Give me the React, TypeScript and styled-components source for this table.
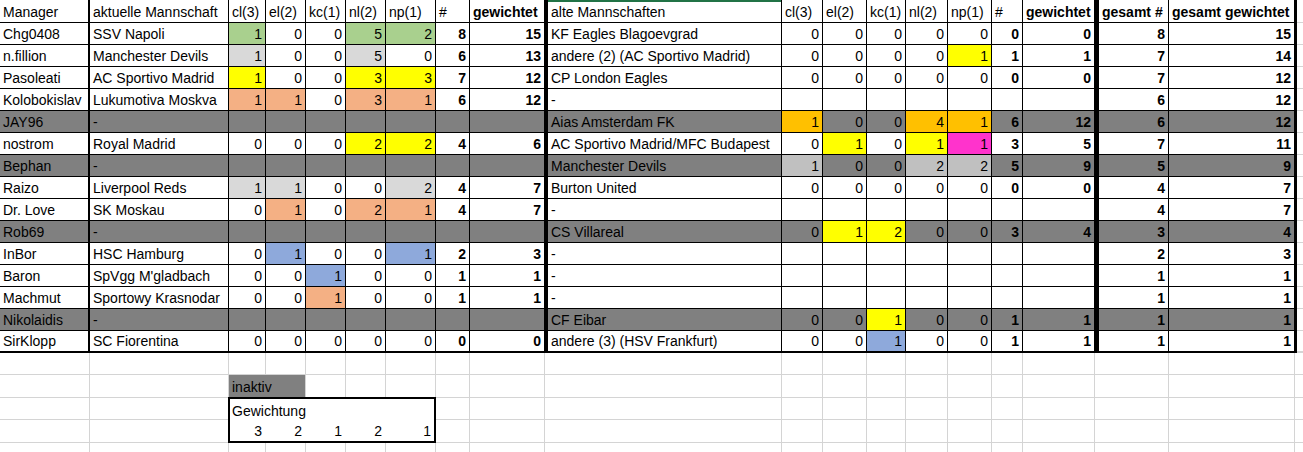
import styled, { createGlobalStyle, css } from "styled-components";

const GlobalStyle = createGlobalStyle`
    html, body {
        margin: 0;
        padding: 0;
        background: #fff;
    }
    body {
        font-family: "Liberation Sans", Arial, sans-serif;
        font-size: 14px;
        color: #000;
    }
`;

// column widths copied from the sheet (each includes its right border)
const COLS = "90px 139px 37px 40px 40px 40px 50px 34px 75px 3px 234px 41px 44px 39px 42px 44px 31px 72px 4px 70px 126px 2px 1fr";
const GRID = "#d4d4d4";
const GRAY = "#808080";

const COLORS: Record<string, string> = {
    g: "#a9d08e",
    l: "#d9d9d9",
    y: "#ffff00",
    s: "#f4b084",
    b: "#8ea9db",
    o: "#ffc000",
    m: "#ff33cc",
    c: "#c0c0c0",
};

const Sheet = styled.div`
    width: 1303px;
    height: 452px;
    overflow: hidden;
`;

const Row = styled.div<{ $h: number; $last?: boolean }>`
    display: grid;
    grid-template-columns: ${COLS};
    height: ${(p) => p.$h}px;

    ${(p) =>
        p.$last &&
        css`
            & > div {
                border-bottom-width: 2px;
            }
        `}
`;

const Cell = styled.div<{ $bg?: string; $right?: boolean; $bold?: boolean; $edge?: boolean; $selected?: boolean }>`
    box-sizing: border-box;
    display: flex;
    align-items: flex-end;
    justify-content: ${(p) => (p.$right ? "flex-end" : "flex-start")};
    padding: 0 3px 1px 3px;
    background: ${(p) => p.$bg || "#fff"};
    border-right: ${(p) => (p.$edge ? "2px" : "1px")} solid #000;
    border-bottom: 1px solid #000;
    font-weight: ${(p) => (p.$bold ? 700 : 400)};
    white-space: nowrap;
    overflow: hidden;
    line-height: 18px;
    ${(p) => p.$selected && "box-shadow: inset 0 2px 0 #217346;"}
`;

const Sep = styled.div`
    background: #000;
`;

const Filler = styled.div`
    box-sizing: border-box;
    border-bottom: 1px solid ${GRID};
`;

const Area = styled.div`
    display: grid;
    grid-template-columns: ${COLS};
    grid-template-rows: 22px 23px 22px 23px 22px;
`;

const GridCell = styled.div<{ $bg?: string }>`
    box-sizing: border-box;
    border-right: 1px solid ${GRID};
    border-bottom: 1px solid ${GRID};
    background: ${(p) => p.$bg || "#fff"};
    display: flex;
    align-items: flex-end;
    padding: 0 3px 1px;
    line-height: 18px;
    white-space: nowrap;
`;

const WeightBox = styled.div`
    grid-column: 3 / span 5;
    grid-row: 3 / span 2;
    box-sizing: border-box;
    border: 2px solid #000;
    margin: -1px 0 0 -1px;
    background: #fff;
    display: grid;
    grid-template-columns: 35px 40px 40px 40px 1fr;
    grid-template-rows: 21px 1fr;
    z-index: 1;
`;

const WeightTitle = styled.div`
    grid-column: 1 / -1;
    display: flex;
    align-items: flex-end;
    padding: 0 3px 0 2px;
    line-height: 18px;
`;

const WeightValue = styled.div`
    display: flex;
    align-items: flex-end;
    justify-content: flex-end;
    padding: 0 3px 1px 0;
    line-height: 18px;
`;

interface Entry {
    m: string;
    t: string;
    gray?: boolean;
    cur?: string;
    cs?: number;
    cw?: number;
    o: string;
    old?: string;
    os?: number;
    ow?: number;
    ts: number;
    tw: number;
}

const rows: Entry[] = [
    { m: "Chg0408", t: "SSV Napoli", cur: "1g 0 0 5g 2g", cs: 8, cw: 15, o: "KF Eagles Blagoevgrad", old: "0 0 0 0 0", os: 0, ow: 0, ts: 8, tw: 15 },
    { m: "n.fillion", t: "Manchester Devils", cur: "1l 0 0 5l 0", cs: 6, cw: 13, o: "andere (2) (AC Sportivo Madrid)", old: "0 0 0 0 1y", os: 1, ow: 1, ts: 7, tw: 14 },
    { m: "Pasoleati", t: "AC Sportivo Madrid", cur: "1y 0 0 3y 3y", cs: 7, cw: 12, o: "CP London Eagles", old: "0 0 0 0 0", os: 0, ow: 0, ts: 7, tw: 12 },
    { m: "Kolobokislav", t: "Lukumotiva Moskva", cur: "1s 1s 0 3s 1s", cs: 6, cw: 12, o: "-", ts: 6, tw: 12 },
    { m: "JAY96", gray: true, t: "-", o: "Aias Amsterdam FK", old: "1o 0 0 4o 1o", os: 6, ow: 12, ts: 6, tw: 12 },
    { m: "nostrom", t: "Royal Madrid", cur: "0 0 0 2y 2y", cs: 4, cw: 6, o: "AC Sportivo Madrid/MFC Budapest", old: "0 1y 0 1y 1m", os: 3, ow: 5, ts: 7, tw: 11 },
    { m: "Bephan", gray: true, t: "-", o: "Manchester Devils", old: "1c 0 0 2c 2c", os: 5, ow: 9, ts: 5, tw: 9 },
    { m: "Raizo", t: "Liverpool Reds", cur: "1l 1l 0 0 2l", cs: 4, cw: 7, o: "Burton United", old: "0 0 0 0 0", os: 0, ow: 0, ts: 4, tw: 7 },
    { m: "Dr. Love", t: "SK Moskau", cur: "0 1s 0 2s 1s", cs: 4, cw: 7, o: "-", ts: 4, tw: 7 },
    { m: "Rob69", gray: true, t: "-", o: "CS Villareal", old: "0 1y 2y 0 0", os: 3, ow: 4, ts: 3, tw: 4 },
    { m: "InBor", t: "HSC Hamburg", cur: "0 1b 0 0 1b", cs: 2, cw: 3, o: "-", ts: 2, tw: 3 },
    { m: "Baron", t: "SpVgg M'gladbach", cur: "0 0 1b 0 0", cs: 1, cw: 1, o: "-", ts: 1, tw: 1 },
    { m: "Machmut", t: "Sportowy Krasnodar", cur: "0 0 1s 0 0", cs: 1, cw: 1, o: "-", ts: 1, tw: 1 },
    { m: "Nikolaidis", gray: true, t: "-", o: "CF Eibar", old: "0 0 1y 0 0", os: 1, ow: 1, ts: 1, tw: 1 },
    { m: "SirKlopp", t: "SC Fiorentina", cur: "0 0 0 0 0", cs: 0, cw: 0, o: "andere (3) (HSV Frankfurt)", old: "0 0 1b 0 0", os: 1, ow: 1, ts: 1, tw: 1 },
];

const stats = ["cl(3)", "el(2)", "kc(1)", "nl(2)", "np(1)"];

// "1g 0 5y" -> [["1", "g"], ["0"], ["5", "y"]]
function parse(s?: string) {
    if (!s) return [0, 1, 2, 3, 4].map(() => ({ v: "", c: undefined as string | undefined }));
    return s.split(" ").map((p) => ({ v: p.replace(/[a-z]/g, ""), c: COLORS[p.replace(/[0-9]/g, "")] }));
}

function StatCells({ values, rowBg }: { values?: string; rowBg?: string }) {
    return (
        <>
            {parse(values).map((x, i) => (
                <Cell key={i} $right $bg={x.c || rowBg}>
                    {x.v}
                </Cell>
            ))}
        </>
    );
}

function HeaderRow() {
    return (
        <Row $h={23}>
            <Cell $edge>Manager</Cell>
            <Cell>aktuelle Mannschaft</Cell>
            {stats.map((s) => (
                <Cell key={"a" + s}>{s}</Cell>
            ))}
            <Cell>#</Cell>
            <Cell $bold>gewichtet</Cell>
            <Sep />
            <Cell $selected>alte Mannschaften</Cell>
            {stats.map((s) => (
                <Cell key={"b" + s}>{s}</Cell>
            ))}
            <Cell>#</Cell>
            <Cell $bold>gewichtet</Cell>
            <Sep />
            <Cell $bold>gesamt #</Cell>
            <Cell $bold>gesamt gewichtet</Cell>
            <Sep />
            <Filler />
        </Row>
    );
}

function DataRow({ r, last }: { r: Entry; last: boolean }) {
    const bg = r.gray ? GRAY : undefined;
    return (
        <Row $h={22} $last={last}>
            <Cell $edge $bg={bg}>
                {r.m}
            </Cell>
            <Cell $bg={bg}>{r.t}</Cell>
            <StatCells values={r.cur} rowBg={bg} />
            <Cell $right $bold $bg={bg}>
                {r.cs}
            </Cell>
            <Cell $right $bold $bg={bg}>
                {r.cw}
            </Cell>
            <Sep />
            <Cell $bg={bg}>{r.o}</Cell>
            <StatCells values={r.old} rowBg={bg} />
            <Cell $right $bold $bg={bg}>
                {r.os}
            </Cell>
            <Cell $right $bold $bg={bg}>
                {r.ow}
            </Cell>
            <Sep />
            <Cell $right $bold $bg={bg}>
                {r.ts}
            </Cell>
            <Cell $right $bold $bg={bg}>
                {r.tw}
            </Cell>
            <Sep />
            <Filler />
        </Row>
    );
}

function EmptyArea() {
    const cells = [];
    for (let row = 1; row <= 5; row++) {
        for (let col = 1; col <= 23; col++) {
            if ((row === 3 || row === 4) && col >= 3 && col <= 7) continue;
            if (row === 2 && col === 3) {
                cells.push(
                    <GridCell key={`${row}-${col}`} $bg={GRAY} style={{ gridColumn: "3 / span 2", gridRow: 2 }}>
                        inaktiv
                    </GridCell>
                );
                continue;
            }
            if (row === 2 && col === 4) continue;
            cells.push(<GridCell key={`${row}-${col}`} style={{ gridColumn: col, gridRow: row }} />);
        }
    }
    return (
        <Area>
            {cells}
            <WeightBox>
                <WeightTitle>Gewichtung</WeightTitle>
                {[3, 2, 1, 2, 1].map((w, i) => (
                    <WeightValue key={i}>{w}</WeightValue>
                ))}
            </WeightBox>
        </Area>
    );
}

export default function App() {
    return (
        <>
            <GlobalStyle />
            <Sheet>
                <HeaderRow />
                {rows.map((r, i) => (
                    <DataRow key={r.m} r={r} last={i === rows.length - 1} />
                ))}
                <EmptyArea />
            </Sheet>
        </>
    );
}
